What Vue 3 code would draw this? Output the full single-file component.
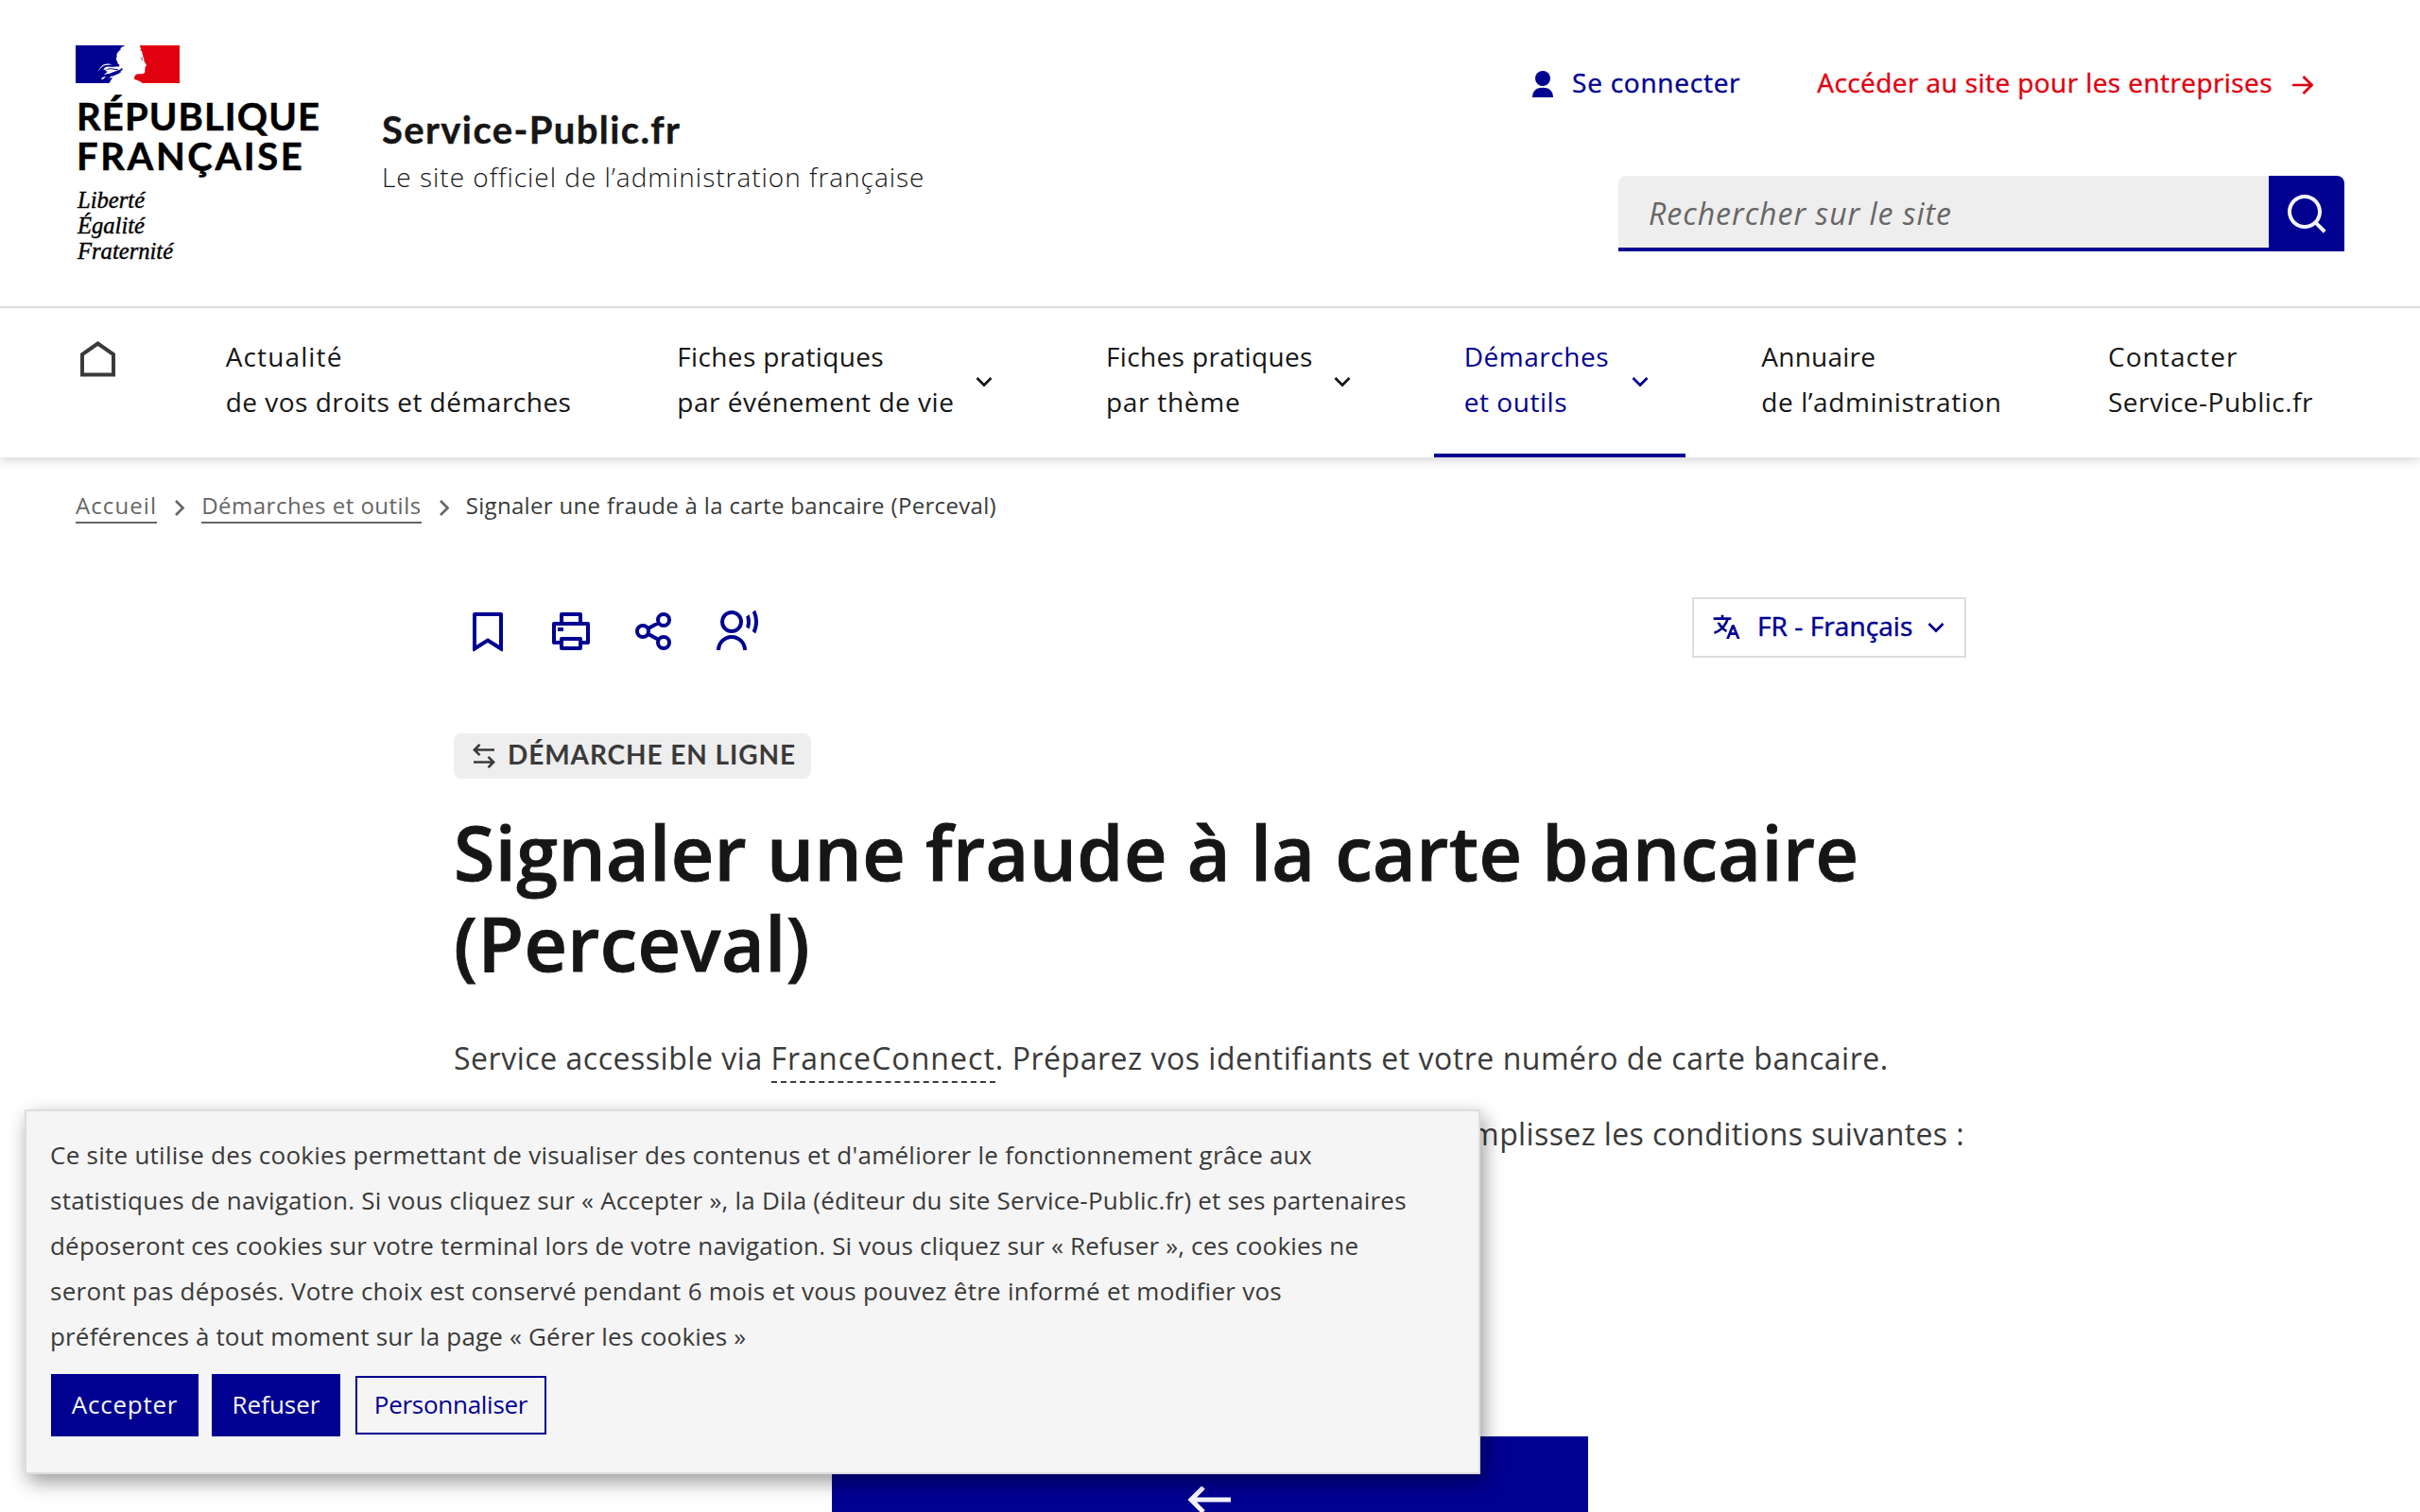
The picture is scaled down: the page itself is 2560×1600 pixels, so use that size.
<script setup>
const navItems = [
  { width: 429, lines: [['Actualité', 1.13], ['de vos droits et démarches', 0.49]] },
  { width: 405, lines: [['Fiches pratiques', 0.36], ['par événement de vie', 0.52]], menu: true },
  { width: 330, lines: [['Fiches pratiques', 0.36], ['par thème', 0.72]], menu: true },
  { width: 266, lines: [['Démarches', 0.54], ['et outils', 0.56]], menu: true, active: true },
  { width: 318, lines: [['Annuaire', 0.24], ['de l’administration', 0.58]] },
  { width: 282, lines: [['Contacter', 1.09], ['Service-Public.fr', 0.49]] }
]

const tools = [
  {
    name: 'Enregistrer',
    path: 'M5 2h14a1 1 0 0 1 1 1v19.143a.5.5 0 0 1-.766.424L12 18.03l-7.234 4.536A.5.5 0 0 1 4 22.143V3a1 1 0 0 1 1-1zm13 2H6v15.432l6-3.761 6 3.761V4z'
  },
  {
    name: 'Imprimer',
    path: 'M6 19H3a1 1 0 0 1-1-1V8a1 1 0 0 1 1-1h3V3a1 1 0 0 1 1-1h10a1 1 0 0 1 1 1v4h3a1 1 0 0 1 1 1v10a1 1 0 0 1-1 1h-3v2a1 1 0 0 1-1 1H7a1 1 0 0 1-1-1v-2zm0-2v-1a1 1 0 0 1 1-1h10a1 1 0 0 1 1 1v1h2V9H4v8h2zM8 4v3h8V4H8zm0 13v3h8v-3H8zm-3-7h3v2H5v-2z'
  },
  {
    name: 'Partager',
    stroke: 'M9 12a3 3 0 1 1-6 0a3 3 0 0 1 6 0zM20 6a3 3 0 1 1-6 0a3 3 0 0 1 6 0zM20 18a3 3 0 1 1-6 0a3 3 0 0 1 6 0zM8.7 10.6L14.4 7.5M8.7 13.4L14.4 16.5'
  },
  {
    name: 'Écouter',
    stroke: 'M14 7a5 5 0 1 1-10 0a5 5 0 0 1 10 0zM2 22a7 7 0 0 1 14 0',
    path: 'M21.548.784A13.942 13.942 0 0 1 23 7c0 2.233-.523 4.344-1.452 6.216l-1.645-1.196A11.955 11.955 0 0 0 21 7c0-1.792-.393-3.493-1.097-5.02L21.548.784zm-3.302 2.4A9.97 9.97 0 0 1 19 7a9.97 9.97 0 0 1-.754 3.816l-1.677-1.22A7.99 7.99 0 0 0 17 7a7.99 7.99 0 0 0-.43-2.596l1.676-1.22z'
  }
]

const cookieLines = [
  ["Ce site utilise des cookies permettant de visualiser des contenus et d'améliorer le fonctionnement grâce aux", 0.26],
  ['statistiques de navigation. Si vous cliquez sur « Accepter », la Dila (éditeur du site Service-Public.fr) et ses partenaires', 0.24],
  ['déposeront ces cookies sur votre terminal lors de votre navigation. Si vous cliquez sur « Refuser », ces cookies ne', 0.19],
  ['seront pas déposés. Votre choix est conservé pendant 6 mois et vous pouvez être informé et modifier vos', 0.26],
  ['préférences à tout moment sur la page « Gérer les cookies »', 0.17]
]
</script>

<template>
  <div class="page">
    <header>
      <div class="masthead">
        <div class="logo">
          <svg class="flag" viewBox="0 0 330 120">
            <path fill="#fff" d="M0 0h330v120H0z" />
            <path fill="#000091" d="M0 0h157c-8 5-12 6-16 11c3 0 4 0 4 1c-7 4-14 11-15 20c2 0 1 2 0 5c-2 6-1 12 3 15c-2 2 1 7 6 10c0 2 0 4-2 6c3 1 1 3 4 5c4 1 9-1 9 3c-8 8-12 11-18 16c-9 6-19 13-25 28H0z" />
            <path fill="#e1000f" d="M203 0h127v120H211c-3-5-14-9-24-12c-2-7 0-13 6-16c8-3 20 1 25-4c4-4 1-9 2-13c2-3-1-4 2-8c4-2 3-5 0-9c-3-5-6-9-5-16c-2-3-4-5-3-9c1-3-2-4-3-7c2-2 1-5-2-8l-4-4l3-3c-1-3-3-5-5-11z" />
            <g fill="#fff">
              <path d="M72 83c3-10 9-18 18-22c8-3 18-3 27 1c-14-1-27 1-34 7c-5 4-6 7-11 14z" />
              <path d="M88 77c3-7 10-10 18-9c12 1 20-2 34 0l4 8l-34 14c-6-1-14 1-21 4l13-11l-9-2l7-4z" />
              <path d="M80 107c4-6 10-8 18-8l-6 4l-4 4zM100 107l15-10c12-5 22-5 33-12l4 1c-7 8-19 15-30 18l-14-1z" />
            </g>
            <path fill="none" stroke="#000091" stroke-width="3" d="M100 76l10-2l24 3M106 92c12-6 22-8 36-14M116 98c10-7 19-8 27-13" />
            <path fill="none" stroke="#72728a" stroke-width="3" d="M205 42l7-1v5l-4 4" />
          </svg>
          <div class="state">
            <div class="state-first">RÉPUBLIQUE</div>
            <div class="state-second">FRANÇAISE</div>
          </div>
          <div class="motto">Liberté<br />Égalité<br />Fraternité</div>
        </div>
        <div class="service">
          <div class="service-title">Service-Public.fr</div>
          <div class="service-tagline">Le site officiel de l’administration française</div>
        </div>
        <div class="header-tools">
          <div class="quick-links">
            <a class="login">
              <svg width="22" height="28" viewBox="0 0 22 28">
                <circle cx="11" cy="8" r="8" fill="currentColor" />
                <path fill="currentColor" d="M0 28a11 11 0 0 1 5-9.300a11 6 0 0 1 12 0A11 11 0 0 1 22 28z" />
              </svg>
              <span>Se connecter</span>
            </a>
            <a class="business">
              <span>Accéder au site pour les entreprises</span>
              <svg width="22" height="20" viewBox="0 0 22 20">
                <path fill="none" stroke="currentColor" stroke-width="2.700" d="M0 10h20M11.500 1l9 9l-9 9" />
              </svg>
            </a>
          </div>
          <div class="search">
            <div class="search-input">Rechercher sur le site</div>
            <div class="search-button">
              <svg width="48" height="48" viewBox="0 0 24 24">
                <path fill="currentColor" d="M18.031 16.617l4.283 4.282-1.415 1.415-4.282-4.283A8.960 8.960 0 0 1 11 20c-4.968 0-9-4.032-9-9s4.032-9 9-9 9 4.032 9 9a8.960 8.960 0 0 1-1.969 5.617zm-2.006-.742A6.977 6.977 0 0 0 18 11c0-3.868-3.133-7-7-7-3.868 0-7 3.132-7 7 0 3.867 3.132 7 7 7a6.977 6.977 0 0 0 4.875-1.975l.15-.15z" />
              </svg>
            </div>
          </div>
        </div>
      </div>

      <nav class="main-nav">
        <a class="home">
          <svg width="37" height="38" viewBox="0 0 37 38">
            <path fill="none" stroke="currentColor" stroke-width="4" d="M2 35.500V14L18.500 2.500L35 14V35.500z" />
          </svg>
        </a>
        <a
          v-for="(item, i) in navItems"
          :key="i"
          class="nav-item"
          :class="{ active: item.active }"
          :style="{ width: item.width + 'px' }"
        >
          <span class="nav-label">
            <span
              v-for="line in item.lines"
              :key="line[0]"
              class="nav-line"
              :style="{ letterSpacing: line[1] + 'px' }"
            >{{ line[0] }}</span>
          </span>
          <svg v-if="item.menu" class="nav-chevron" width="32" height="32" viewBox="0 0 32 32">
            <path fill="none" stroke="currentColor" stroke-width="2.700" d="M8.500 12l7.500 7.500L23.500 12" />
          </svg>
        </a>
      </nav>
    </header>

    <div class="breadcrumb">
      <a class="crumb crumb-home">Accueil</a>
      <svg width="47" height="38" viewBox="0 0 47 38"><path fill="none" stroke="currentColor" stroke-width="2.700" d="M20 14l7.500 7.500L20 29" /></svg>
      <a class="crumb">Démarches et outils</a>
      <svg width="47" height="38" viewBox="0 0 47 38"><path fill="none" stroke="currentColor" stroke-width="2.700" d="M20 14l7.500 7.500L20 29" /></svg>
      <span class="crumb-current">Signaler une fraude à la carte bancaire (Perceval)</span>
    </div>

    <main>
      <div class="toolbar">
        <div class="tools">
          <svg v-for="tool in tools" :key="tool.name" width="48" height="48" viewBox="0 0 24 24" :aria-label="tool.name">
            <path v-if="tool.stroke" :d="tool.stroke" fill="none" stroke="currentColor" stroke-width="2" />
            <path v-if="tool.path" :d="tool.path" fill="currentColor" />
          </svg>
        </div>
        <div class="language">
          <svg width="32" height="32" viewBox="0 0 24 24">
            <path fill="currentColor" d="M18.500 10l4.400 11h-2.155l-1.201-3h-4.090l-1.199 3h-2.154L16.500 10h2zM10 2v2h6v2h-1.968a18.222 18.222 0 0 1-3.620 6.301 14.864 14.864 0 0 0 2.336 1.707l-.751 1.878A17.015 17.015 0 0 1 9 13.725a16.676 16.676 0 0 1-6.201 3.548l-.536-1.929a14.700 14.700 0 0 0 5.327-3.042A18.078 18.078 0 0 1 4.767 8h2.240A16.032 16.032 0 0 0 9 10.877a16.165 16.165 0 0 0 2.910-4.876L2 6V4h6V2h2zm7.500 10.885L16.253 16h2.492L17.500 12.885z" />
          </svg>
          <span>FR - Français</span>
          <svg width="32" height="32" viewBox="0 0 32 32">
            <path fill="none" stroke="currentColor" stroke-width="2.700" d="M8.500 12l7.500 7.500L23.500 12" />
          </svg>
        </div>
      </div>

      <div class="badge">
        <svg width="24" height="26" viewBox="0 0 24 26">
          <path fill="none" stroke="currentColor" stroke-width="2.600" d="M23 6.500H2M7.500 .9L1.900 6.500l5.600 5.600M1 19.500h21M16.500 13.900l5.600 5.600l-5.600 5.600" />
        </svg>
        <span>DÉMARCHE EN LIGNE</span>
      </div>

      <h1>Signaler une fraude à la carte bancaire (Perceval)</h1>

      <p class="intro">Service accessible via <span class="term">FranceConnect</span>. Préparez vos identifiants et votre numéro de carte bancaire.</p>
      <p class="conditions">remplissez les conditions suivantes :</p>

      <div class="panel">
        <svg width="48" height="28" viewBox="0 0 48 28">
          <path fill="none" stroke="currentColor" stroke-width="5" d="M46 14H4M17 1L4 14l13 13" />
        </svg>
      </div>
    </main>

    <div class="cookies">
      <p>
        <span
          v-for="line in cookieLines"
          :key="line[0]"
          class="cookie-line"
          :style="{ letterSpacing: line[1] + 'px' }"
        >{{ line[0] }}</span>
      </p>
      <div class="cookie-actions">
        <button class="accept">Accepter</button>
        <button class="refuse">Refuser</button>
        <button class="customize">Personnaliser</button>
      </div>
    </div>
  </div>
</template>

<style>
body {
  margin: 0;
  overflow: hidden;
}
</style>

<style scoped>
.page {
  position: relative;
  width: 2560px;
  height: 1600px;
  overflow: hidden;
  background: #fff;
  color: #161616;
  font-family: "Open Sans", "Noto Sans", sans-serif;
  font-variant-ligatures: none;
}
svg {
  display: block;
  flex: none;
}

/* Header */
header {
  background: #fff;
  box-shadow: 0 2px 12px rgba(0, 0, 18, 0.2);
}
.masthead {
  display: flex;
  height: 324px;
  padding: 0 80px;
  border-bottom: 2px solid #ddd;
}
.logo {
  width: 324px;
  padding-top: 48px;
  color: #000;
}
.flag {
  width: 110px;
  height: 40px;
}
.state {
  margin: 14px 0 12px 1px;
  font: 700 40px/42px Lato, sans-serif;
  -webkit-text-stroke: 0.5px #000;
}
.state-first {
  letter-spacing: 1.09px;
}
.state-second {
  letter-spacing: 2.6px;
}
.motto {
  padding-left: 2px;
  font: italic 24.6px/27px "Liberation Serif", serif;
  -webkit-text-stroke: 0.4px #000;
}
.service {
  padding-top: 113px;
}
.service-title {
  font: 700 40px/48px Lato, sans-serif;
  letter-spacing: 1.39px;
  -webkit-text-stroke: 0.4px #161616;
}
.service-tagline {
  margin-top: 6px;
  font-size: 28px;
  font-weight: 300;
  line-height: 40px;
  letter-spacing: 0.98px;
}
.header-tools {
  margin-left: auto;
  padding-top: 63px;
}
.quick-links {
  display: flex;
  justify-content: flex-end;
  gap: 81px;
  padding-right: 33px;
  font-size: 28px;
  font-weight: 500;
  line-height: 48px;
  -webkit-text-stroke: 0.4px;
}
.quick-links a {
  display: flex;
  align-items: center;
}
.login {
  gap: 20px;
  color: #000091;
  letter-spacing: 0.75px;
}
.login svg {
  margin-top: 4px;
}
.business {
  gap: 21px;
  color: #e1000f;
  letter-spacing: 0.42px;
}
.business svg {
  margin-top: 6px;
}
.search {
  display: flex;
  width: 768px;
  height: 80px;
  margin: 75px 0 0 auto;
  border-radius: 8px 8px 0 0;
  overflow: hidden;
}
.search-input {
  box-sizing: border-box;
  width: 688px;
  padding-left: 32px;
  border-bottom: 4px solid #000091;
  background: #eee;
  color: #666;
  font-size: 32px;
  font-style: italic;
  line-height: 80px;
  letter-spacing: 0.98px;
}
.search-button {
  display: flex;
  align-items: center;
  justify-content: center;
  width: 80px;
  background: #000091;
  color: #f5f5fe;
}

/* Navigation */
.main-nav {
  display: flex;
  justify-content: space-between;
  height: 158px;
  padding: 0 80px;
}
.home {
  box-sizing: border-box;
  width: 78px;
  padding: 35px 0 0 5px;
  color: #3a3a3a;
}
.nav-item {
  box-sizing: border-box;
  display: flex;
  align-items: flex-start;
  justify-content: space-between;
  flex: none;
  padding: 27px 32px 0;
}
.nav-label {
  display: flex;
  flex-direction: column;
  font-size: 28px;
  line-height: 48px;
  white-space: nowrap;
}
.nav-chevron {
  margin-top: 35px;
}
.nav-item.active {
  border-bottom: 4px solid #000091;
  color: #000091;
}

/* Breadcrumb */
.breadcrumb {
  display: flex;
  padding: 32px 80px 0;
  color: #666;
  font-size: 24px;
  line-height: 38px;
}
.crumb {
  box-shadow: inset 0 -2px #666;
  letter-spacing: 0.49px;
}
.crumb-home {
  letter-spacing: 1.1px;
}
.crumb-current {
  color: #3a3a3a;
  letter-spacing: 0.33px;
}

/* Content */
main {
  width: 1600px;
  margin: 78px auto 0;
}
.toolbar {
  display: flex;
  justify-content: space-between;
  color: #000091;
}
.tools {
  display: flex;
  gap: 40px;
  padding: 12px 0 0 12px;
}
.language {
  box-sizing: border-box;
  display: flex;
  align-items: center;
  width: 290px;
  height: 64px;
  padding-left: 18px;
  border: 2px solid #ddd;
}
.language span {
  width: 173px;
  margin-left: 17px;
  padding-bottom: 5px;
  font-size: 28px;
  font-weight: 500;
  letter-spacing: 0.09px;
  white-space: nowrap;
  -webkit-text-stroke: 0.5px;
}
.badge {
  box-sizing: border-box;
  display: flex;
  width: 378px;
  height: 48px;
  margin-top: 80px;
  padding-left: 20px;
  gap: 13px;
  border-radius: 8px;
  background: #eee;
  color: #3a3a3a;
  font: 700 28px/44px Lato, sans-serif;
  letter-spacing: 0.92px;
  white-space: nowrap;
}
.badge svg {
  margin-top: 11px;
}
h1 {
  margin: 30px 0 46px;
  font-size: 79px;
  font-weight: 600;
  line-height: 96px;
  letter-spacing: 0.4px;
  -webkit-text-stroke: 0.9px #161616;
}
p {
  margin: 0;
}
.intro,
.conditions {
  color: #3a3a3a;
  font-size: 32px;
  line-height: 56px;
  letter-spacing: 0.53px;
  white-space: nowrap;
}
.term {
  padding-bottom: 3px;
  border-bottom: 2px dashed #3a3a3a;
  letter-spacing: 1.05px;
}
.conditions {
  margin-top: 24px;
  padding-right: 2px;
  letter-spacing: 0.39px;
  text-align: right;
}
.panel {
  display: flex;
  justify-content: center;
  width: 800px;
  height: 200px;
  margin: 292px auto 0;
  padding-top: 53px;
  box-sizing: border-box;
  background: #000091;
  color: #f5f5fe;
}

/* Cookie notice floating above the page */
.cookies {
  position: absolute;
  left: 26px;
  top: 1174px;
  box-sizing: border-box;
  width: 1540px;
  height: 386px;
  padding: 22px 25px;
  border: 2px solid #ddd;
  background: #f5f5f5;
  box-shadow: 4px 8px 20px rgba(0, 0, 0, 0.4);
  color: #3a3a3a;
  font-size: 26px;
  line-height: 48px;
  white-space: nowrap;
}
.cookie-line {
  display: block;
}
.cookie-actions {
  display: flex;
  align-items: center;
  margin: 16px 0 0 1px;
}
button {
  box-sizing: border-box;
  height: 66px;
  padding: 0 0 2px;
  border: 0;
  border-radius: 0;
  background: #000091;
  color: #f5f5fe;
  font: 400 26px/48px "Open Sans", "Noto Sans", sans-serif;
}
.accept {
  width: 156px;
  letter-spacing: 0.75px;
}
.refuse {
  width: 136px;
  margin: 0 16px 0 14px;
}
.customize {
  width: 202px;
  height: 62px;
  border: 2px solid #000091;
  background: transparent;
  color: #000091;
  letter-spacing: -0.28px;
}
</style>
